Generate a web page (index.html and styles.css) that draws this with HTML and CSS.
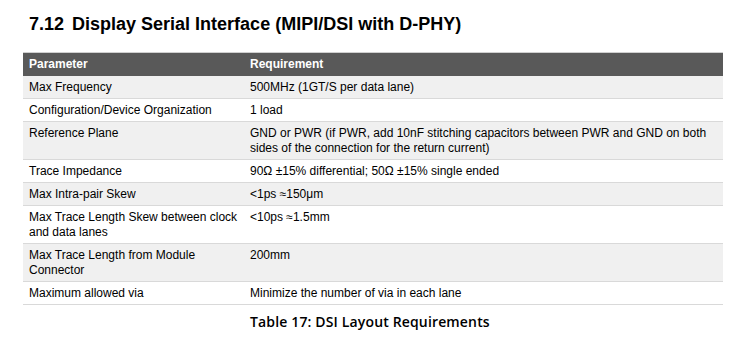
FILE: index.html
```html
<!DOCTYPE html>
<html>
<head>
<meta charset="utf-8">
<link rel="stylesheet" href="styles.css">
</head>
<body>
<div class="page">
  <h2 class="title"><span class="num">7.12</span>Display Serial Interface (MIPI/DSI with D-PHY)</h2>
  <table class="spec">
    <thead>
      <tr><th class="c1">Parameter</th><th>Requirement</th></tr>
    </thead>
    <tbody>
      <tr><td>Max Frequency</td><td>500MHz (1GT/S per data lane)</td></tr>
      <tr><td>Configuration/Device Organization</td><td>1 load</td></tr>
      <tr><td>Reference Plane</td><td>GND or PWR (if PWR, add 10nF stitching capacitors between PWR and GND on both sides of the connection for the return current)</td></tr>
      <tr><td>Trace Impedance</td><td>90Ω ±15% differential; 50Ω ±15% single ended</td></tr>
      <tr><td>Max Intra-pair Skew</td><td>&lt;1ps ≈150μm</td></tr>
      <tr><td>Max Trace Length Skew between clock and data lanes</td><td>&lt;10ps ≈1.5mm</td></tr>
      <tr><td>Max Trace Length from Module Connector</td><td>200mm</td></tr>
      <tr><td>Maximum allowed via</td><td>Minimize the number of via in each lane</td></tr>
    </tbody>
  </table>
  <div class="caption">Table 17: DSI Layout Requirements</div>
</div>
</body>
</html>
```
FILE: styles.css
```css
html, body { margin: 0; padding: 0; background: #fff; }
.page {
  padding: 13px 25px 0 23px;
  font-family: "Liberation Sans", Arial, sans-serif;
  color: #000;
}
.title {
  margin: 0 0 0 6px;
  font-size: 18px;
  line-height: 22px;
  font-weight: bold;
  height: 39px;
}
.title .num { margin-right: 8px; }
.spec {
  width: 700px;
  border-collapse: collapse;
  font-size: 12px;
  line-height: 15px;
}
.spec th {
  background: #595959;
  color: #fff;
  text-align: left;
  font-weight: bold;
  padding: 4px 6px 4px 6px;
  border-top: 1px solid #d0d0d0;
  height: 15px;
}
.spec th.c1 { width: 209px; }
.spec td {
  padding: 4px 6px 3px 6px;
  vertical-align: top;
  border-bottom: 1px solid #d9d9d9;
}
.spec tbody tr:nth-child(odd) td { background: #f0f0f0; }
.caption {
  margin: 9px 0 0 227px;
  font-family: "Open Sans", "DejaVu Sans", sans-serif;
  font-weight: 600;
  font-size: 14px;
  letter-spacing: 0.15px;
  line-height: 16px;
}
```
